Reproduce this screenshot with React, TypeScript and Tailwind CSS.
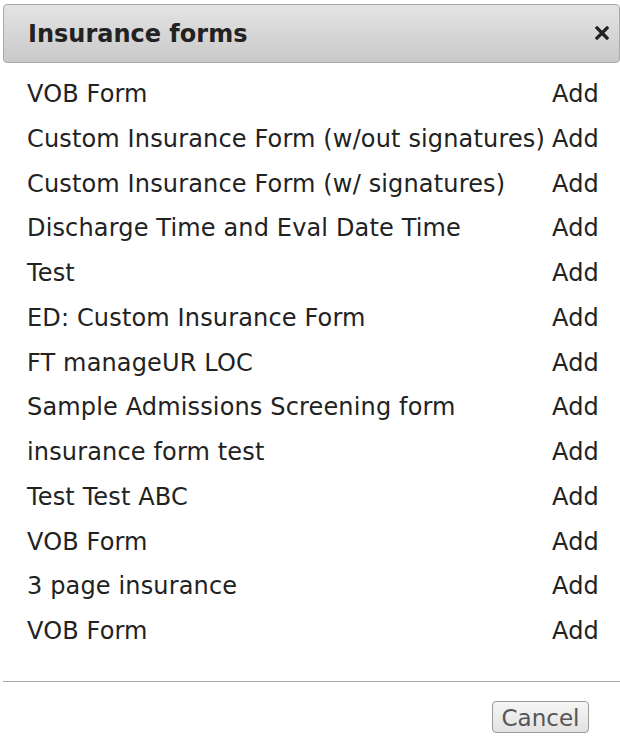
import React from "react";

const forms = [
  "VOB Form",
  "Custom Insurance Form (w/out signatures)",
  "Custom Insurance Form (w/ signatures)",
  "Discharge Time and Eval Date Time",
  "Test",
  "ED: Custom Insurance Form",
  "FT manageUR LOC",
  "Sample Admissions Screening form",
  "insurance form test",
  "Test Test ABC",
  "VOB Form",
  "3 page insurance",
  "VOB Form",
];

export default function App() {
  return (
    <div
      className="w-[620px] h-[747px] bg-white overflow-hidden pl-[3px] pt-[4px]"
      style={{ fontFamily: '"DejaVu Sans", Verdana, sans-serif' }}
    >
      <div className="h-[59px] flex items-center justify-between border border-[#aaaaaa] rounded-[4px] bg-gradient-to-b from-[#e4e4e4] to-[#c9c9c9] pl-[24px] pr-[10px]">
        <span className="text-[24px] font-bold text-[#222222]">Insurance forms</span>
        <svg width="14" height="14" viewBox="0 0 14 14" className="mb-[2px]">
          <path d="M2 2 L12 12 M12 2 L2 12" stroke="#222" strokeWidth="3.2" strokeLinecap="square" />
        </svg>
      </div>
      <div className="pt-[9px] pl-[24px] pr-[21px]">
        {forms.map((f, i) => (
          <div key={i} className="flex justify-between text-[24px] tracking-[0.15px] leading-[44.75px] text-[#222222]">
            <span>{f}</span>
            <span>Add</span>
          </div>
        ))}
      </div>
      <div className="mt-[27px] border-t border-[#aaaaaa]" />
      <div className="flex justify-end pr-[31px] pt-[19px]">
        <button className="h-[32px] w-[97px] border border-[#9a9a9a] rounded-[4px] bg-gradient-to-b from-[#f6f6f6] to-[#e2e2e2] text-[23px] text-[#555555] leading-none pt-[3px]">
          Cancel
        </button>
      </div>
    </div>
  );
}
